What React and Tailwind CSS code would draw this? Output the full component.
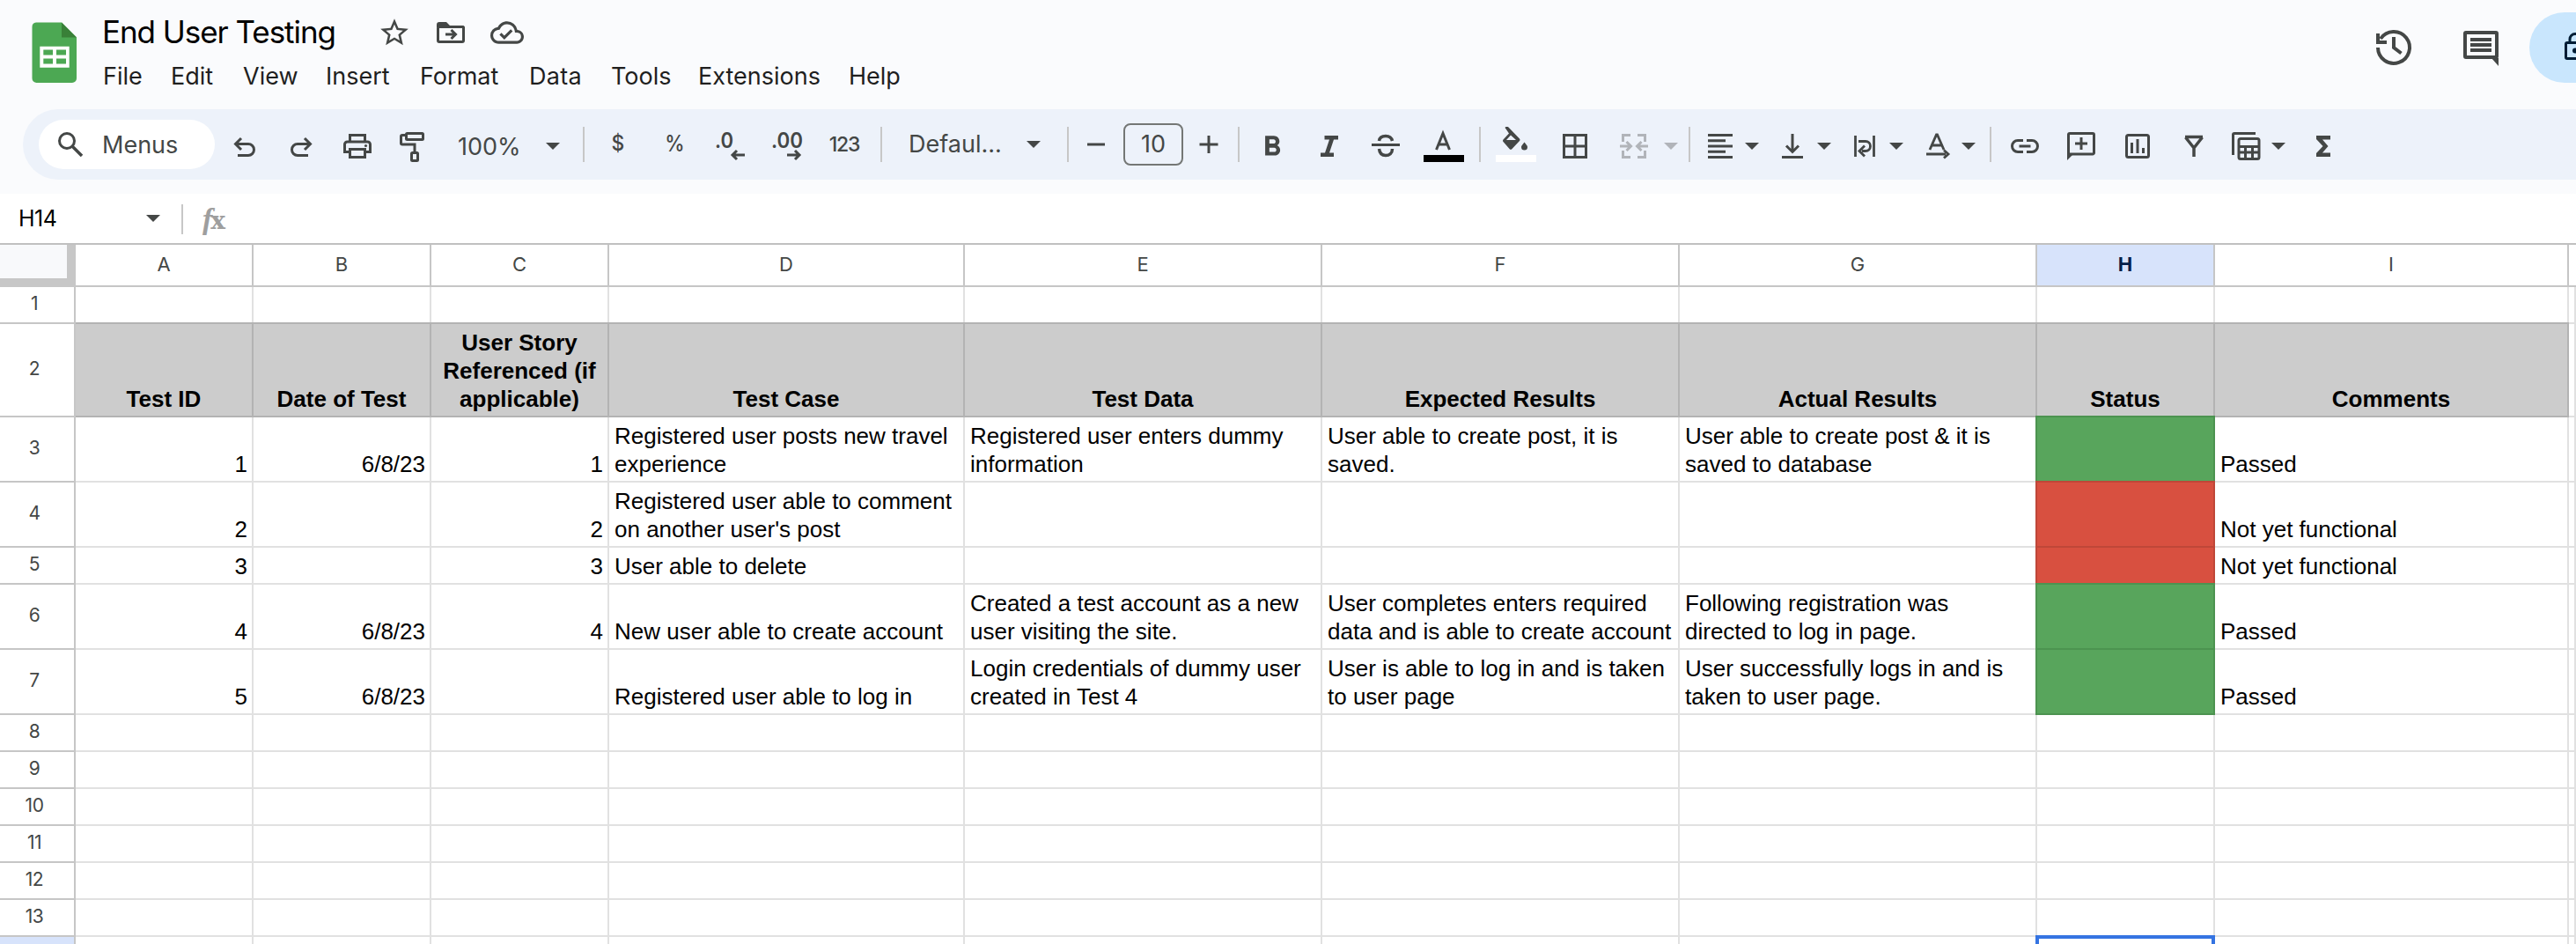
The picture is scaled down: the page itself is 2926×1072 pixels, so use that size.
import React from "react";
import { MdStarBorder, MdOutlineCloudDone, MdFormatBold } from "react-icons/md";

const UI = "font-['Inter',sans-serif]";

function Icon({ className = "", w = 40, children }) {
  return (
    <svg
      width={w}
      height="40"
      viewBox={`0 0 ${w} 40`}
      fill="none"
      stroke="currentColor"
      strokeWidth="3"
      className={`block shrink-0 ${className}`}
    >
      {children}
    </svg>
  );
}

function Caret({ className = "" }) {
  return (
    <svg width="16" height="8" viewBox="0 0 16 8" className={`block shrink-0 ${className}`}>
      <path d="M0 0h16L8 8z" fill="currentColor" />
    </svg>
  );
}

function Sep({ className = "" }) {
  return <div className={`h-10 w-0.5 shrink-0 bg-[#c7c7c7] ${className}`} />;
}

function Header() {
  return (
    <header className="flex h-[124px] items-start overflow-hidden text-[#444746]">
      <svg width="52" height="70" viewBox="0 0 52 70" className="mt-[25px] ml-9 block shrink-0">
        <path d="M5 .5h29l17 17V64a5 5 0 0 1-5 5H5.500a5 5 0 0 1-5-5V5.500a5 5 0 0 1 4.500-5z" fill="#4ca853" />
        <path d="M34 .5l17 17H34z" fill="#398038" />
        <path d="M9.300 27.700h33.400v24H9.300z" fill="#fff" />
        <path d="M13.300 31.500h10.700v6H13.300zM28 31.500h11v6H28zM13.300 41.500h10.700v6H13.300zM28 41.500h11v6H28z" fill="#4ca853" />
      </svg>
      <div className="ml-[27px] flex flex-col">
        <div className="mt-[14px] flex h-[46px] items-center">
          <div className={`${UI} mb-[3px] w-[314px] pl-px text-[35px] leading-[46px] tracking-[-1.050px] whitespace-nowrap text-black`}>
            End User Testing
          </div>
          <MdStarBorder size={38} className="block shrink-0" />
          <Icon className="ml-[25px]">
            <path d="M4 14v-3a3 3 0 0 1 3-3h8l4 4h14a3 3 0 0 1 3 3z" fill="currentColor" stroke="none" />
            <rect x="5.500" y="13.500" width="29" height="17" rx="1.500" />
            <path d="M14 22h11M20.500 17l5 5-5 5" />
          </Icon>
          <MdOutlineCloudDone size={38} className="ml-[25px] block shrink-0" />
        </div>
        <nav className={`${UI} mt-[9px] flex pl-[2px] text-[27px] leading-9 whitespace-nowrap text-[#1f1f1f]`}>
          <span className="w-[77px]">File</span>
          <span className="w-[82px]">Edit</span>
          <span className="w-[94px]">View</span>
          <span className="w-[107px]">Insert</span>
          <span className="w-[124px]">Format</span>
          <span className="w-[93px] tracking-[0.3px]">Data</span>
          <span className="w-[99px]">Tools</span>
          <span className="w-[171px]">Extensions</span>
          <span>Help</span>
        </nav>
      </div>
      <div className="ml-auto flex shrink-0">
        <svg width="48" height="48" viewBox="0 0 48 48" fill="none" stroke="currentColor" strokeWidth="4" className="mt-[30px] block">
          <path d="M6 24A18 18 0 1 0 9 14" />
          <path d="M6 8v10h10M24 12v12l8.500 6.500" />
        </svg>
        <svg width="48" height="48" viewBox="0 0 48 48" fill="none" stroke="currentColor" strokeWidth="4" className="mt-[31px] ml-[51px] block">
          <rect x="6" y="6" width="36" height="28" rx="1" />
          <path d="M12 14h24M12 20h24M12 26h24" />
          <path d="M36 35h8v9z" fill="currentColor" stroke="none" />
        </svg>
        <div className="mt-[14px] ml-[31px] flex h-20 w-[53px] items-center overflow-hidden rounded-l-full bg-[#c9e6fd] pl-10 text-[#001d35]">
          <svg width="24" height="34" viewBox="0 0 24 34" fill="none" stroke="currentColor" strokeWidth="3" className="mb-[3px] block shrink-0">
            <rect x="1.500" y="12.500" width="21" height="18" rx="1.500" />
            <path d="M6 12V8.500a6 6 0 0 1 12 0V12" />
            <circle cx="12" cy="21.500" r="3" fill="currentColor" stroke="none" />
          </svg>
        </div>
      </div>
    </header>
  );
}

function Toolbar() {
  return (
    <div className={`${UI} ml-[26px] flex h-20 items-center overflow-hidden rounded-l-full bg-[#edf2fa] pl-[18px] whitespace-nowrap text-[#444746]`}>
      <div className="flex h-14 w-[200px] shrink-0 items-center rounded-full bg-white">
        <svg width="30" height="30" viewBox="0 0 30 30" fill="none" stroke="currentColor" strokeWidth="3" className="ml-[21px] block">
          <circle cx="11" cy="11" r="8.500" />
          <path d="M17 17l11 11" strokeWidth="3.600" />
        </svg>
        <span className="mt-px ml-[21px] text-[27px] leading-9">Menus</span>
      </div>
      <Icon className="ml-[14px]">
        <path d="M16 13l-6.500 6.500L16 26M10 19.500h14a6.500 6.500 0 0 1 0 13H12" />
      </Icon>
      <Icon className="ml-6">
        <path d="M24 13l6.500 6.500L24 26M30 19.500H16a6.500 6.500 0 0 0 0 13h12" />
      </Icon>
      <Icon className="ml-6">
        <path d="M11.500 17V9.500h17V17M10 28.500H5.500V20a3 3 0 0 1 3-3h23a3 3 0 0 1 3 3v8.500H30" />
        <rect x="11.500" y="25.500" width="17" height="9" />
        <circle cx="29.500" cy="21.500" r="1.600" fill="currentColor" stroke="none" />
      </Icon>
      <Icon className="ml-6">
        <rect x="11.500" y="7.500" width="19" height="7" rx="1" />
        <path d="M10 9.500H7a1.500 1.500 0 0 0-1.500 1.500v7.500a1.500 1.500 0 0 0 1.500 1.500h14v8" />
        <rect x="17.500" y="29.500" width="7" height="9" rx="1" />
      </Icon>
      <span className="mt-[5px] w-[120px] shrink-0 pl-[30px] text-[27px] leading-9">100%</span>
      <Caret className="mt-1 ml-[10px]" />
      <Sep className="ml-[26px]" />
      <span className="mb-0.5 ml-[18px] w-10 shrink-0 text-center text-[24px] leading-9 font-medium">
        <span className="inline-block scale-x-[0.95]">$</span>
      </span>
      <span className="mb-0.5 ml-6 w-10 shrink-0 text-center text-[25px] leading-9 font-medium">
        <span className="inline-block scale-x-[0.9]">%</span>
      </span>
      <Icon className="ml-6">
        <text x="2" y="24" fontSize="24" fontWeight="600" textLength="21" lengthAdjust="spacingAndGlyphs" fill="currentColor" stroke="none">.0</text>
        <path d="M36 32H22M27 27l-5 5 5 5" />
      </Icon>
      <Icon className="ml-6">
        <text x="2" y="24" fontSize="24" fontWeight="600" textLength="36" lengthAdjust="spacingAndGlyphs" fill="currentColor" stroke="none">.00</text>
        <path d="M20 32h14M29 27l5 5-5 5" />
      </Icon>
      <span className="ml-5 w-[50px] shrink-0 text-center text-[23px] leading-9 font-medium tracking-[-1.200px]">123</span>
      <Sep className="ml-4" />
      <span className="ml-[30px] w-[120px] shrink-0 text-[27px] leading-9">Defaul...</span>
      <Caret className="ml-[14px]" />
      <Sep className="ml-[30px]" />
      <Icon className="ml-[11px]">
        <path d="M10 20h20" />
      </Icon>
      <div className="ml-[11px] flex h-12 w-[68px] shrink-0 items-center justify-center rounded-lg border-2 border-[#747775] text-[27px] leading-9">
        10
      </div>
      <Icon className="ml-[9px]">
        <path d="M9.500 20h21M20 10v20" />
      </Icon>
      <Sep className="ml-[13px]" />
      <MdFormatBold size={38} className="mt-[5px] mr-0.5 ml-[18px] block shrink-0" />
      <Icon className="ml-6">
        <path d="M14.500 10H30v4.500h-5L20 29.500h5V34H10v-4.500h5L20 14.500h-5.500z" fill="currentColor" stroke="none" />
      </Icon>
      <Icon className="ml-6">
        <path d="M4 20.500h32" />
        <path d="M12.500 16c.5-4 3.500-5.500 7.500-5.500s6.500 1.500 7.500 5.500M12.500 25c.5 5 3.500 7.500 7.500 7.500s7.500-2.500 7.500-7.500" strokeWidth="3.500" />
      </Icon>
      <Icon w={46} className="ml-[23px]">
        <path d="M14.500 26L22 7.500L29.500 26M17 20h10" />
        <path d="M0 32h46v8H0z" fill="#000" stroke="none" />
      </Icon>
      <Sep className="ml-[17px]" />
      <Icon w={46} className="ml-[17px]">
        <path d="M12.500-1.500L27 13.500a2 2 0 0 1 0 2.500l-8.500 9a2 2 0 0 1-3 0L8.500 17a2 2 0 0 1 0-2.500L15 7.500 10.500 1z M17 9.500L12 15h11z" fill="currentColor" fillRule="evenodd" stroke="none" />
        <path d="M32.500 17.500c2 2.500 3.500 4 3.500 5.500a3.500 3.500 0 0 1-7 0c0-1.500 1.500-3 3.500-5.500z" fill="currentColor" stroke="none" />
        <path d="M0 32h46v8H0z" fill="#fff" stroke="none" />
      </Icon>
      <Icon className="ml-6">
        <path d="M7.500 9.500h25v25h-25zM20 9.500v25M7.500 22h25" />
      </Icon>
      <Icon className="ml-[27px] text-[#b1b4b9]">
        <path d="M16 9.500H7.500V17M24 9.500h8.500V17M16 34.500H7.500V27M24 34.500h8.500V27M4 22h12M11.500 17l5 5-5 5M36 22H24M28.500 17l-5 5 5 5" />
      </Icon>
      <Caret className="mt-1 ml-[14px] text-[#b1b4b9]" />
      <Sep className="ml-3" />
      <Icon className="ml-[14px]">
        <path d="M6 9.500h28M6 15.700h20M6 22h28M6 28.300h20M6 34.500h28" />
      </Icon>
      <Caret className="mt-1 ml-2" />
      <Icon className="ml-[18px]">
        <path d="M20 8v20M13 21.500l7 7 7-7M8 34.500h24" />
      </Icon>
      <Caret className="mt-1 ml-2" />
      <Icon className="ml-[18px]">
        <path d="M9.500 10v24M30.500 10v24M13 16.500h8a5.500 5.500 0 0 1 0 11h-4M20 21.500l-6 6 6 6" strokeWidth="2.800" />
      </Icon>
      <Caret className="mt-1 ml-2" />
      <Icon className="ml-[18px]">
        <path d="M12 26l7.500-17h1L28 26M14.500 21h11M8 31h22M28 26.500l5 4.500-5 4.500" strokeWidth="2.800" />
      </Icon>
      <Caret className="mt-1 ml-2" />
      <Sep className="ml-4" />
      <Icon className="ml-[18px]">
        <path d="M18 15.500h-6a6.500 6.500 0 0 0 0 13h6M22 15.500h6a6.500 6.500 0 0 1 0 13h-6M13.500 22h13" />
      </Icon>
      <Icon className="ml-6">
        <path d="M5.500 34V9a1.500 1.500 0 0 1 1.500-1.500h26a1.500 1.500 0 0 1 1.500 1.500v20.500a1.500 1.500 0 0 1-1.500 1.500H7M13 19h14M20 12v14" />
        <path d="M4 38V30h8z" fill="currentColor" stroke="none" />
      </Icon>
      <Icon className="ml-6">
        <rect x="7.500" y="9.500" width="25" height="25" rx="2" />
        <path d="M13.500 18v12M20 14v16M26.500 24v6" />
      </Icon>
      <Icon className="ml-6">
        <path d="M10 11.500h20M10.500 12l9.500 12 9.500-12M20 22v12" strokeWidth="3.500" />
      </Icon>
      <Icon className="ml-5">
        <path d="M4.500 32V9a1.500 1.500 0 0 1 1.500-1.500h24" />
        <rect x="11" y="13.500" width="23" height="23" rx="2" />
        <path d="M11 22.500h23M11 29h23M18.500 23v13M26.500 23v13" />
      </Icon>
      <Caret className="mt-1 ml-2" />
      <Icon className="ml-[23px]">
        <path d="M12 10h16v4.500h-9l6.500 7.500-6.500 7.500h9V34H12v-4l7.500-8L12 14z" fill="currentColor" stroke="none" />
      </Icon>
    </div>
  );
}

function FormulaBar() {
  return (
    <div className="flex h-14 items-center bg-white">
      <span className={`${UI} w-[166px] pb-px pl-[21px] text-[25px] leading-9 tracking-[-0.5px] text-black`}>H14</span>
      <Caret className="text-[#444746]" />
      <div className="mt-[2px] ml-6 h-[34px] w-0.5 bg-[#c7c7c7]" />
      <span className="mt-1 ml-[22px] flex items-baseline leading-9 text-[#9e9e9e]">
        <span className="font-['Liberation_Serif',serif] text-[34px] font-bold italic">f</span>
        <span className="-ml-[2px] font-['DejaVu_Serif',serif] text-[28px] font-bold">x</span>
      </span>
    </div>
  );
}

const COLUMNS = ["A", "B", "C", "D", "E", "F", "G", "H", "I", ""];

const ROW_HEIGHTS = {
  2: "h-[106px]",
  3: "h-[74px]",
  4: "h-[74px]",
  6: "h-[74px]",
  7: "h-[74px]",
};

const DATA = {
  2: ["Test ID", "Date of Test", "User Story\nReferenced (if\napplicable)", "Test Case", "Test Data", "Expected Results", "Actual Results", "Status", "Comments"],
  3: ["1", "6/8/23", "1", "Registered user posts new travel\nexperience", "Registered user enters dummy\ninformation", "User able to create post, it is\nsaved.", "User able to create post & it is\nsaved to database", "pass", "Passed"],
  4: ["2", "", "2", "Registered user able to comment\non another user's post", "", "", "", "fail", "Not yet functional"],
  5: ["3", "", "3", "User able to delete", "", "", "", "fail", "Not yet functional"],
  6: ["4", "6/8/23", "4", "New user able to create account", "Created a test account as a new\nuser visiting the site.", "User completes enters required\ndata and is able to create account", "Following registration was\ndirected to log in page.", "pass", "Passed"],
  7: ["5", "6/8/23", "", "Registered user able to log in", "Login credentials of dummy user\ncreated in Test 4", "User is able to log in and is taken\nto user page", "User successfully logs in and is\ntaken to user page.", "pass", "Passed"],
};

const GRID = "grid grid-cols-[86px_202px_202px_202px_404px_406px_406px_406px_202px_402px_8px]";

function Cell({ row, col, value }) {
  if (row === 14 && col === 7) {
    return <div className="z-10 -mt-0.5 -ml-0.5 border-4 border-[#3574e2] bg-white" />;
  }
  if (row === 2 && col < 9) {
    return (
      <div className="z-[1] -mt-0.5 flex items-end justify-center border-t-2 border-r-2 border-b-2 border-[#b3b3b3] bg-[#cccccc] pb-[3px] text-center font-bold whitespace-pre">
        {value}
      </div>
    );
  }
  if (value === "pass") {
    return <div className="z-[2] -mt-0.5 -ml-0.5 border-2 border-[#4c9350] bg-[#58a55c]" />;
  }
  if (value === "fail") {
    return <div className="z-[2] -mt-0.5 -ml-0.5 border-2 border-[#bf4738] bg-[#d85040]" />;
  }
  return (
    <div className={`flex items-end overflow-hidden border-r-2 border-b-2 border-[#e1e1e1] pb-[3px] whitespace-pre ${col < 3 ? "justify-end pr-[5px]" : "pl-[6px]"}`}>
      {value}
    </div>
  );
}

function Sheet() {
  return (
    <div className="h-[796px] overflow-hidden border-t-2 border-[#c0c0c0] bg-white">
      <div className={`${GRID} ${UI} h-12 text-[22px] leading-7 text-[#444746]`}>
        <div className="border-r-[10px] border-b-[10px] border-[#c7c7c7] bg-[#f8f9fb]" />
        {COLUMNS.map((c, i) => (
          <div
            key={i}
            className={`flex items-center justify-center border-b-2 border-[#c6c6c6] pb-[2px] ${i === 9 ? "" : "border-r-2"} ${c === "H" ? "bg-[#d7e3fb] font-bold text-[#041e49]" : ""}`}
          >
            {c}
          </div>
        ))}
      </div>
      {Array.from({ length: 14 }, (_, r) => r + 1).map((row) => (
        <div key={row} className={`${GRID} ${ROW_HEIGHTS[row] || "h-[42px]"} font-['Liberation_Sans',Arial,sans-serif] text-[26px] leading-8 text-black`}>
          <div className={`${UI} flex items-center justify-center border-r-2 border-b-2 border-[#c6c6c6] pr-[6px] pb-[3px] text-[21px] tracking-[-0.500px] text-[#444746] ${row === 14 ? "bg-[#d7e3fb]" : ""}`}>
            {row < 14 ? row : ""}
          </div>
          {COLUMNS.map((_, col) => (
            <Cell key={col} row={row} col={col} value={(DATA[row] || [])[col] || ""} />
          ))}
        </div>
      ))}
    </div>
  );
}

export default function App() {
  return (
    <div className="h-[1072px] w-[2926px] overflow-hidden bg-[#fafbfd]">
      <Header />
      <Toolbar />
      <div className="h-4" />
      <FormulaBar />
      <Sheet />
    </div>
  );
}
